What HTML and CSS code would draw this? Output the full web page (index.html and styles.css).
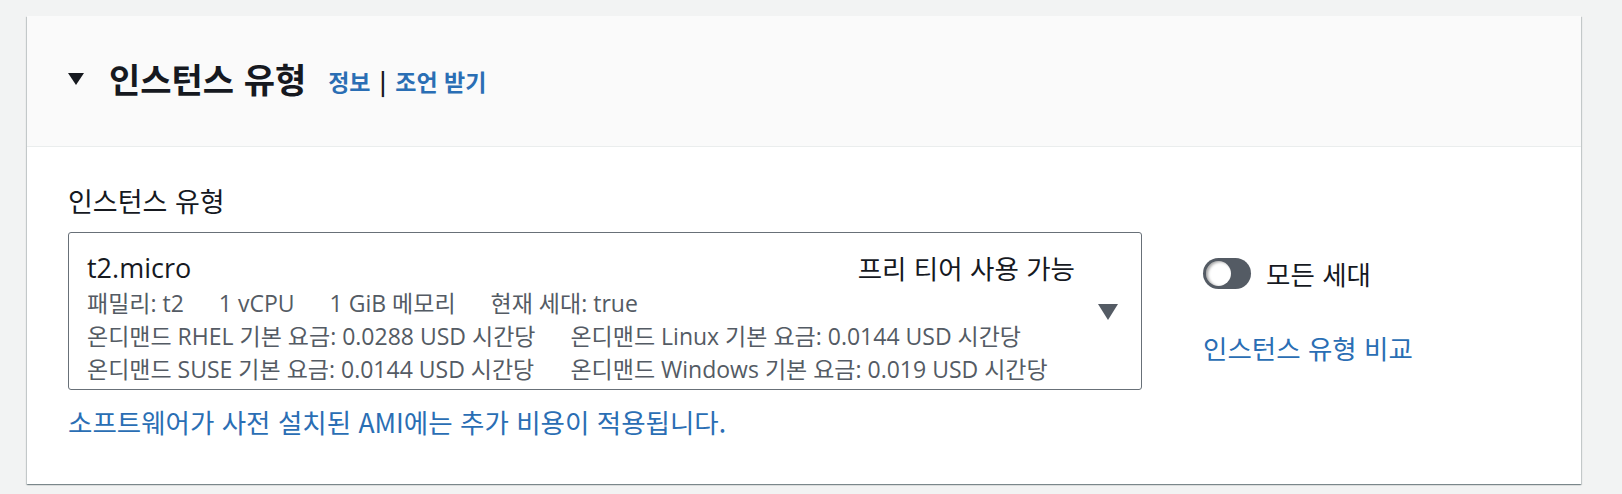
FILE: index.html
```html
<!DOCTYPE html>
<html lang="ko">
<head>
<meta charset="utf-8">
<link rel="stylesheet" href="styles.css">
</head>
<body>
<div class="page">
  <section class="card">
    <header class="card-header">
      <svg class="expand-caret" width="16" height="12" viewBox="0 0 16 12"><path d="M0 0h16L8 12z" fill="#16191f"/></svg>
      <h2 class="title">인스턴스 유형</h2>
      <div class="header-links">
        <a class="link bold">정보</a>
        <span class="sep">|</span>
        <a class="link bold">조언 받기</a>
      </div>
    </header>
    <div class="card-body">
      <div class="field-label">인스턴스 유형</div>
      <div class="field-row">
        <div class="field-main">
          <div class="select">
            <div class="select-content">
              <div class="option-top">
                <span class="option-name">t2.micro</span>
                <span class="option-tag">프리 티어 사용 가능</span>
              </div>
              <div class="option-tags">
                <span>패밀리: t2</span>
                <span>1 vCPU</span>
                <span>1 GiB 메모리</span>
                <span>현재 세대: true</span>
              </div>
              <div class="option-grid">
                <span>온디맨드 RHEL 기본 요금: 0.0288 USD 시간당</span>
                <span>온디맨드 Linux 기본 요금: 0.0144 USD 시간당</span>
                <span>온디맨드 SUSE 기본 요금: 0.0144 USD 시간당</span>
                <span>온디맨드 Windows 기본 요금: 0.019 USD 시간당</span>
              </div>
            </div>
            <div class="select-caret">
              <svg width="20" height="16" viewBox="0 0 20 16"><path d="M0 0h20L10 16z" fill="#545b64"/></svg>
            </div>
          </div>
          <a class="link note">소프트웨어가 사전 설치된 AMI에는 추가 비용이 적용됩니다.</a>
        </div>
        <div class="field-side">
          <div class="toggle-row">
            <span class="toggle"><span class="knob"></span></span>
            <span class="toggle-label">모든 세대</span>
          </div>
          <a class="link compare">인스턴스 유형 비교</a>
        </div>
      </div>
    </div>
  </section>
</div>
</body>
</html>
```

FILE: styles.css
```css
* { box-sizing: border-box; }
html, body { margin: 0; padding: 0; }
body {
  background: #f2f3f3;
  font-family: "Open Sans", "Noto Sans CJK KR", sans-serif;
  color: #16191f;
  width: 1622px;
  height: 494px;
  overflow: hidden;
}
.page { padding: 16px 0 0 27px; }
.card {
  width: 1554px;
  height: 468px;
  background: #fff;
  box-shadow: 0 1px 1px 0 rgba(0,28,36,.3), 1px 1px 1px 0 rgba(0,28,36,.15), -1px 1px 1px 0 rgba(0,28,36,.15);
}
.card-header {
  height: 131px;
  background: #fafafa;
  border-bottom: 1px solid #eaeded;
  display: flex;
  align-items: center;
  padding-left: 41px;
  padding-bottom: 4px;
}
.expand-caret { display: block; margin-right: 25px; }
.title {
  margin: 0;
  font-size: 34px;
  font-weight: 700;
  line-height: 40px;
  font-family: "Noto Sans CJK KR", sans-serif;
}
.header-links {
  display: flex;
  align-items: center;
  margin-left: 22px;
  font-family: "Noto Sans CJK KR", sans-serif;
  font-size: 23px;
  font-weight: 700;
  line-height: 30px;
  padding-top: 4px;
}
.sep { color: #16191f; margin: 0 9px; font-weight: 700; }
.link { color: #2a6eb4; text-decoration: none; }
.bold { font-weight: 700; }
.card-body { padding: 37px 0 0 41px; }
.field-label {
  font-size: 27px;
  line-height: 34px;
  font-family: "Noto Sans CJK KR", sans-serif;
}
.field-row { display: flex; margin-top: 14px; }
.field-main { width: 1074px; display: flex; flex-direction: column; }
.select {
  height: 158px;
  border: 1px solid #687078;
  border-radius: 3px;
  display: flex;
}
.select-content { flex: 1; padding: 14px 0 0 18px; }
.option-top {
  display: flex;
  justify-content: space-between;
  align-items: center;
  height: 40px;
}
.option-name { font-size: 27px; }
.option-tag { font-size: 26.5px; font-family: "Noto Sans CJK KR", sans-serif; }
.option-tags, .option-grid {
  color: #545b64;
  font-size: 23px;
  line-height: 33px;
}
.option-tags { display: flex; gap: 35px; }
.option-grid {
  display: grid;
  grid-template-columns: auto auto;
  column-gap: 35px;
  justify-content: start;
}
.select-caret {
  width: 66px;
  display: flex;
  align-items: center;
  justify-content: center;
  padding-top: 2px;
}
.select-caret svg { display: block; }
.note {
  margin-top: 16px;
  font-size: 26.5px;
  line-height: 32px;
  font-family: "Noto Sans CJK KR", "Open Sans", sans-serif;
}
.field-side { margin-left: 61px; padding-top: 25px; display: flex; flex-direction: column; align-items: flex-start; }
.toggle-row { display: flex; align-items: center; height: 33px; }
.toggle {
  width: 48px;
  height: 31px;
  border-radius: 16px;
  background: #545b64;
  display: flex;
  align-items: center;
  padding-left: 3px;
}
.knob {
  width: 25px;
  height: 25px;
  border-radius: 50%;
  background: #fff;
  box-shadow: inset 2px 1px 3px rgba(0,0,0,.35);
}
.toggle-label {
  margin-left: 15px;
  font-size: 26.5px;
  font-family: "Noto Sans CJK KR", sans-serif;
}
.compare {
  margin-top: 42px;
  font-size: 26.5px;
  line-height: 32px;
  font-family: "Noto Sans CJK KR", sans-serif;
}
```
